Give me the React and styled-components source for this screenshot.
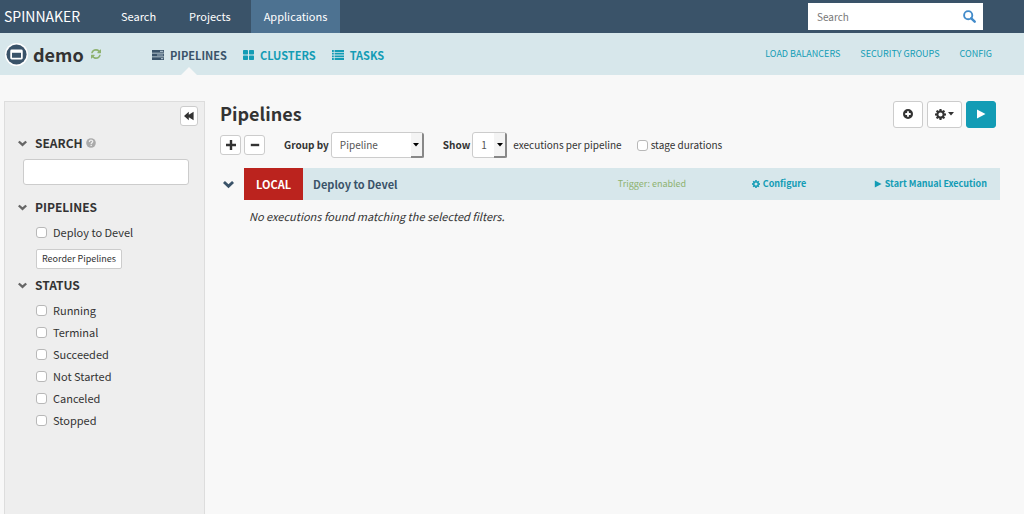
import React, { useState } from "react";
import styled, { createGlobalStyle, css } from "styled-components";

const statuses = [
  "Running",
  "Terminal",
  "Succeeded",
  "Not Started",
  "Canceled",
  "Stopped",
];

const navLinks = [
  { title: "Search" },
  { title: "Projects" },
  { title: "Applications", active: true },
];

const GlobalStyle = createGlobalStyle`
  * {
    box-sizing: border-box;
  }
  body {
    margin: 0;
    background: #f8f8f8;
    color: #333;
    font-family: "Noto Sans CJK JP", "Noto Sans", sans-serif;
    font-size: 11px;
    line-height: 16px;
  }
  button, input, select {
    font: inherit;
    color: inherit;
    margin: 0;
  }
  a {
    color: #139cb5;
    text-decoration: none;
  }
  svg {
    display: block;
    flex: none;
    fill: currentColor;
  }
`;

/* icons */

const PipelinesIcon = () => (
  <svg width="12" height="10" viewBox="0 0 12 10">
    <path d="M0 0h12v2.800H0zM0 3.600h12v2.800H0zM0 7.200h12v2.800H0z" />
    <path d="M8 .8h3.200v1.200H8zM5 4.400h6.200v1.200H5zM9 8h2.200v1.200H9z" fill="#a4b8c5" />
  </svg>
);

const ClustersIcon = () => (
  <svg width="11" height="10" viewBox="0 0 11 10">
    <rect width="5" height="4.500" rx="0.700" />
    <rect x="6" width="5" height="4.500" rx="0.700" />
    <rect y="5.500" width="5" height="4.500" rx="0.700" />
    <rect x="6" y="5.500" width="5" height="4.500" rx="0.700" />
  </svg>
);

const TasksIcon = () => (
  <svg width="12" height="10" viewBox="0 0 12 10">
    <path d="M0 0h1.800v1.900H0zM2.600 0H12v1.900H2.600zM0 2.700h1.800v1.900H0zM2.600 2.700H12v1.900H2.600zM0 5.400h1.800v1.900H0zM2.600 5.400H12v1.900H2.600zM0 8.100h1.800V10H0zM2.600 8.100H12V10H2.600z" />
  </svg>
);

const AppIcon = () => (
  <svg width="23" height="23" viewBox="0 0 24 24">
    <circle cx="12" cy="12" r="12" fill="#fff" />
    <circle cx="12" cy="12" r="10.500" fill="#3a5369" />
    <rect x="5.500" y="6.800" width="13" height="10.400" rx="1.500" fill="#fff" />
    <path d="M7.300 10.200h9.400v5.200H7.300z" fill="#3a5369" />
  </svg>
);

const RefreshIcon = () => (
  <svg width="10" height="10" viewBox="0 0 1536 1536">
    <path d="M1511 928q0 5-1 7-64 268-268 434.500T764 1536q-146 0-282.500-55T238 1324l-129 129q-19 19-45 19t-45-19-19-45V960q0-26 19-45t45-19h448q26 0 45 19t19 45-19 45l-137 137q71 66 161 102t187 36q134 0 250-65t186-179q11-17 53-117 8-23 30-23h192q13 0 22.500 9.500t9.500 22.500zm25-800v448q0 26-19 45t-45 19h-448q-26 0-45-19t-19-45 19-45l138-138Q969 256 768 256q-134 0-250 65T332 500q-11 17-53 117-8 23-30 23H50q-13 0-22.500-9.500T18 608v-7q65-268 270-434.500T768 0q146 0 284 55.500T1297 212l130-129q19-19 45-19t45 19 19 45z" />
  </svg>
);

const SearchIcon = () => (
  <svg width="13" height="13" viewBox="0 0 13 13">
    <circle cx="5.200" cy="5.200" r="4.100" fill="none" stroke="currentColor" strokeWidth="1.900" />
    <path d="M8.300 8.300l3.400 3.400" stroke="currentColor" strokeWidth="2.400" strokeLinecap="round" />
  </svg>
);

const ChevronIcon = ({ size = 9 }) => (
  <svg width={size} height={size} viewBox="0 0 12 12">
    <path d="M0 4.300L2.100 2.200 6 5.800l3.900-3.600L12 4.300 6 10z" />
  </svg>
);

const BackwardIcon = () => (
  <svg width="10" height="10" viewBox="0 0 10 10">
    <path d="M0 5l4.800-4.300v3.100L9.600.7v8.600L4.800 6.200v3.100z" />
  </svg>
);

const HelpIcon = () => (
  <svg width="10" height="10" viewBox="0 0 10 10">
    <circle cx="5" cy="5" r="4.800" />
    <path
      d="M3.400 3.900C3.400 2.700 4.100 2.200 5 2.200s1.700.5 1.700 1.400C6.700 4.700 5.200 4.600 5.200 6"
      fill="none"
      stroke="#eee"
      strokeWidth="1.300"
    />
    <path d="M4.500 6.700h1.400v1.300H4.500z" fill="#eee" />
  </svg>
);

const PlusIcon = () => (
  <svg width="10" height="10" viewBox="0 0 10 10">
    <path d="M3.800 0h2.400v3.800H10v2.400H6.200V10H3.800V6.200H0V3.800h3.800z" />
  </svg>
);

const MinusIcon = () => (
  <svg width="10" height="10" viewBox="0 0 10 10">
    <path d="M.8 3.800h8.400v2.400H.8z" />
  </svg>
);

const AddCircleIcon = () => (
  <svg width="10" height="10" viewBox="0 0 10 10">
    <path
      fillRule="evenodd"
      d="M5 0a5 5 0 1 1 0 10A5 5 0 0 1 5 0zM4.100 2.300v1.800H2.300v1.800h1.800v1.800h1.800V5.900h1.800V4.100H5.900V2.300z"
    />
  </svg>
);

const CogIcon = ({ size }) => (
  <svg width={size} height={size} viewBox="0 0 12 12">
    <circle cx="6" cy="6" r="3.300" fill="none" stroke="currentColor" strokeWidth="2" />
    {[0, 45, 90, 135, 180, 225, 270, 315].map((angle) => (
      <path key={angle} d="M4.900 0h2.200l.3 2.500H4.600z" transform={`rotate(${angle} 6 6)`} />
    ))}
  </svg>
);

const PlayIcon = ({ size }) => (
  <svg width={size} height={size} viewBox="0 0 10 10">
    <path d="M1 .5L9.500 5 1 9.500z" />
  </svg>
);

const CaretIcon = () => (
  <svg width="6" height="4" viewBox="0 0 6 4">
    <path d="M0 0h6L3 3.500z" />
  </svg>
);

/* top bars */

const Page = styled.div`
  display: flex;
  flex-direction: column;
  min-height: 100vh;
`;

const TopNav = styled.nav`
  display: flex;
  align-items: stretch;
  gap: 7px;
  height: 33px;
  padding: 0 41px 0 4px;
  background: #3a5369;
`;

const Brand = styled.a`
  width: 97px;
  color: #fff;
  font-size: 14px;
  line-height: 33px;
`;

const NavLink = styled.a`
  padding: 0 13px;
  color: #fff;
  line-height: 32px;
  background: ${(props) => (props.$active ? "#4d7291" : "transparent")};
`;

const GlobalSearch = styled.form`
  display: flex;
  align-items: center;
  align-self: center;
  width: 175px;
  height: 27px;
  margin-left: auto;
  padding: 0 7px 0 9px;
  color: #428bca;
  background: #fff;

  input {
    flex: 1;
    min-width: 0;
    padding: 0;
    border: 0;
    outline: 0;
    color: #555;
    font-size: 10px;
  }
  input::placeholder {
    color: #777;
    opacity: 1;
  }
`;

const AppBar = styled.header`
  display: flex;
  align-items: center;
  height: 42px;
  padding: 0 32px 0 5px;
  background: #d7e7eb;
`;

const AppTitle = styled.h1`
  display: flex;
  align-items: center;
  gap: 5px;
  width: 147px;
  margin: 0;
  font-size: 18px;
  line-height: 24px;

  button {
    margin-left: 2px;
    padding: 0;
    border: 0;
    color: #8eb26f;
    background: none;
  }
`;

const AppTabs = styled.div`
  display: flex;
  align-self: stretch;
  gap: 16px;
`;

const AppTab = styled.a`
  position: relative;
  display: flex;
  align-items: center;
  gap: 6px;
  padding-top: 2px;
  font-weight: bold;

  ${(props) =>
    props.$active &&
    css`
      color: #3a5369;
      &:after {
        position: absolute;
        bottom: 0;
        left: 50%;
        content: "";
        margin-left: -8px;
        border: 8px solid transparent;
        border-top: 0;
        border-bottom-color: #f8f8f8;
      }
    `}
`;

const AppLinks = styled.div`
  display: flex;
  gap: 20px;
  margin-left: auto;
  font-size: 9px;
`;

/* sidebar */

const Body = styled.div`
  display: flex;
  flex: 1;
  gap: 15px;
  padding: 26px 24px 0 4px;
`;

const Sidebar = styled.aside`
  flex: none;
  width: 201px;
  padding: 4px 6px 0 13px;
  background: #eee;
  border: 1px solid #ddd;
  border-bottom: 0;
`;

const IconButton = styled.button`
  display: flex;
  align-items: center;
  justify-content: center;
  width: ${(props) => props.$width || 21}px;
  height: ${(props) => props.$height || 20}px;
  padding: 0;
  gap: 2px;
  color: ${(props) => (props.$primary ? "#fff" : "#333")};
  background: ${(props) => (props.$primary ? "#139cb5" : "#fff")};
  border: 1px solid ${(props) => (props.$primary ? "#139cb5" : "#ccc")};
  border-radius: 3px;
`;

const CollapseRow = styled.div`
  display: flex;
  justify-content: flex-end;
  margin-bottom: 7px;

  button {
    width: 18px;
  }
`;

const FilterHeading = styled.h4`
  display: flex;
  align-items: center;
  gap: 3px;
  margin: 0;
  font-size: 12px;
  line-height: 20px;

  svg:first-child {
    margin-right: 5px;
    color: #666;
  }
  svg:last-child:not(:first-child) {
    color: #aaa;
  }
`;

const FilterInput = styled.input`
  display: block;
  width: 166px;
  height: 26px;
  margin: 6px 0 12px 5px;
  padding: 0 8px;
  background: #fff;
  border: 1px solid #ccc;
  border-radius: 3px;
`;

const FilterOptions = styled.div`
  padding: 4px 0 0 18px;
`;

const CheckLabel = styled.label`
  display: flex;
  align-items: center;
  gap: ${(props) => props.$gap || 6}px;
  height: 22px;

  input {
    appearance: none;
    width: 11px;
    height: 11px;
    background: #fff;
    border: 1px solid #b8b8b8;
    border-radius: 3px;
  }
  input:checked {
    background: #139cb5;
  }
`;

const SmallButton = styled.button`
  display: block;
  height: 20px;
  margin: 6px 0;
  padding: 0 5px;
  font-size: 9px;
  line-height: 16px;
  background: #fff;
  border: 1px solid #ccc;
  border-radius: 2px;
`;

/* pipelines */

const Main = styled.main`
  flex: 1;
  min-width: 0;
`;

const MainHeader = styled.div`
  display: flex;
  align-items: center;
  gap: 4px;
  height: 26px;
  padding-right: 4px;

  h2 {
    flex: 1;
    margin: 0;
    padding-bottom: 2px;
    font-size: 18px;
    line-height: 24px;
  }
`;

const Toolbar = styled.div`
  display: flex;
  align-items: center;
  gap: 3px;
  margin-top: 5px;
  height: 26px;
  font-size: 10px;
`;

const ToolbarGroup = styled.div`
  display: flex;
  align-items: center;
  gap: 2px;
  margin-left: 16px;

  > label:first-child {
    font-weight: bold;
  }
`;

const SelectBox = styled.div`
  position: relative;
  width: ${(props) => props.$width}px;
  height: 26px;

  select {
    appearance: none;
    width: 100%;
    height: 100%;
    padding: 0 14px 0 8px;
    color: #555;
    background: #fff;
    border: 1px solid #ccc;
    border-radius: 3px;
  }
`;

const SelectArrow = styled.span`
  position: absolute;
  top: 1px;
  right: 0;
  bottom: 0;
  display: flex;
  align-items: center;
  justify-content: center;
  width: 13px;
  color: #000;
  background: #f4f4f4;
  border-right: 2px solid #888;
  border-bottom: 2px solid #888;
  border-radius: 0 2px 2px 0;
  pointer-events: none;
`;

const ExecutionsHint = styled.span`
  margin: 0 12px 0 3px;
`;

const GroupRow = styled.div`
  display: flex;
  align-items: center;
  margin-top: 10px;
`;

const GroupToggle = styled.button`
  display: flex;
  width: 24px;
  padding: 0 0 0 3px;
  color: #3a5369;
  background: none;
  border: 0;
`;

const GroupBand = styled.div`
  display: flex;
  flex: 1;
  align-items: center;
  height: 32px;
  padding-right: 13px;
  font-size: 9px;
  background: #d7e7eb;
`;

const AccountTag = styled.span`
  align-self: stretch;
  padding: 0 12px;
  color: #fff;
  font-size: 11px;
  font-weight: bold;
  line-height: 32px;
  background: #bb231e;
`;

const GroupTitle = styled.h3`
  flex: 1;
  margin: 0;
  padding-left: 10px;
  color: #3a5369;
  font-size: 11px;
`;

const TriggerStatus = styled.span`
  width: 134px;
  color: #8eb26f;
`;

const GroupAction = styled.a`
  display: flex;
  align-items: center;
  gap: 3px;
  width: ${(props) => (props.$wide ? "122px" : "auto")};
  font-weight: bold;
`;

const EmptyMessage = styled.p`
  margin: 8px 0 0 29px;
  font-style: italic;
`;

const Select = ({ id, width, options }) => (
  <SelectBox $width={width}>
    <select id={id}>
      {options.map((option) => (
        <option key={option}>{option}</option>
      ))}
    </select>
    <SelectArrow>
      <CaretIcon />
    </SelectArrow>
  </SelectBox>
);

const Filters = () => {
  return (
    <Sidebar>
      <CollapseRow>
        <IconButton aria-label="Hide filters">
          <BackwardIcon />
        </IconButton>
      </CollapseRow>
      <FilterHeading>
        <ChevronIcon />
        <label htmlFor="filter">SEARCH</label>
        <HelpIcon />
      </FilterHeading>
      <FilterInput id="filter" type="text" />
      <FilterHeading>
        <ChevronIcon />
        <span>PIPELINES</span>
      </FilterHeading>
      <FilterOptions>
        <CheckLabel>
          <input type="checkbox" />
          Deploy to Devel
        </CheckLabel>
        <SmallButton>Reorder Pipelines</SmallButton>
      </FilterOptions>
      <FilterHeading>
        <ChevronIcon />
        <span>STATUS</span>
      </FilterHeading>
      <FilterOptions>
        {statuses.map((status) => (
          <CheckLabel key={status}>
            <input type="checkbox" />
            {status}
          </CheckLabel>
        ))}
      </FilterOptions>
    </Sidebar>
  );
};

const App = () => {
  const [open, setOpen] = useState(true);

  return (
    <Page>
      <GlobalStyle />
      <TopNav>
        <Brand href="#">SPINNAKER</Brand>
        {navLinks.map((link) => (
          <NavLink key={link.title} href="#" $active={link.active}>
            {link.title}
          </NavLink>
        ))}
        <GlobalSearch>
          <input type="text" placeholder="Search" aria-label="Search" />
          <SearchIcon />
        </GlobalSearch>
      </TopNav>
      <AppBar>
        <AppTitle>
          <AppIcon />
          demo
          <button aria-label="Refresh">
            <RefreshIcon />
          </button>
        </AppTitle>
        <AppTabs>
          <AppTab href="#" $active>
            <PipelinesIcon />
            PIPELINES
          </AppTab>
          <AppTab href="#">
            <ClustersIcon />
            CLUSTERS
          </AppTab>
          <AppTab href="#">
            <TasksIcon />
            TASKS
          </AppTab>
        </AppTabs>
        <AppLinks>
          <a href="#">LOAD BALANCERS</a>
          <a href="#">SECURITY GROUPS</a>
          <a href="#">CONFIG</a>
        </AppLinks>
      </AppBar>
      <Body>
        <Filters />
        <Main>
          <MainHeader>
            <h2>Pipelines</h2>
            <IconButton $width={30} $height={27} aria-label="Create pipeline">
              <AddCircleIcon />
            </IconButton>
            <IconButton $width={35} $height={27} aria-label="Settings">
              <CogIcon size={11} />
              <CaretIcon />
            </IconButton>
            <IconButton $width={30} $height={27} $primary aria-label="Start">
              <PlayIcon size={10} />
            </IconButton>
          </MainHeader>
          <Toolbar>
            <IconButton aria-label="Expand all">
              <PlusIcon />
            </IconButton>
            <IconButton aria-label="Collapse all">
              <MinusIcon />
            </IconButton>
            <ToolbarGroup>
              <label htmlFor="group">Group by</label>
              <Select id="group" width={93} options={["Pipeline", "None"]} />
            </ToolbarGroup>
            <ToolbarGroup>
              <label htmlFor="count">Show</label>
              <Select id="count" width={35} options={["1", "2", "5", "10"]} />
            </ToolbarGroup>
            <ExecutionsHint>executions per pipeline</ExecutionsHint>
            <CheckLabel $gap={3}>
              <input type="checkbox" />
              stage durations
            </CheckLabel>
          </Toolbar>
          <GroupRow>
            <GroupToggle aria-label="Toggle group" onClick={() => setOpen(!open)}>
              <ChevronIcon size={11} />
            </GroupToggle>
            <GroupBand>
              <AccountTag>LOCAL</AccountTag>
              <GroupTitle>Deploy to Devel</GroupTitle>
              <TriggerStatus>Trigger: enabled</TriggerStatus>
              <GroupAction href="#" $wide>
                <CogIcon size={8} />
                Configure
              </GroupAction>
              <GroupAction href="#">
                <PlayIcon size={8} />
                Start Manual Execution
              </GroupAction>
            </GroupBand>
          </GroupRow>
          {open && (
            <EmptyMessage>No executions found matching the selected filters.</EmptyMessage>
          )}
        </Main>
      </Body>
    </Page>
  );
};

export default App;
